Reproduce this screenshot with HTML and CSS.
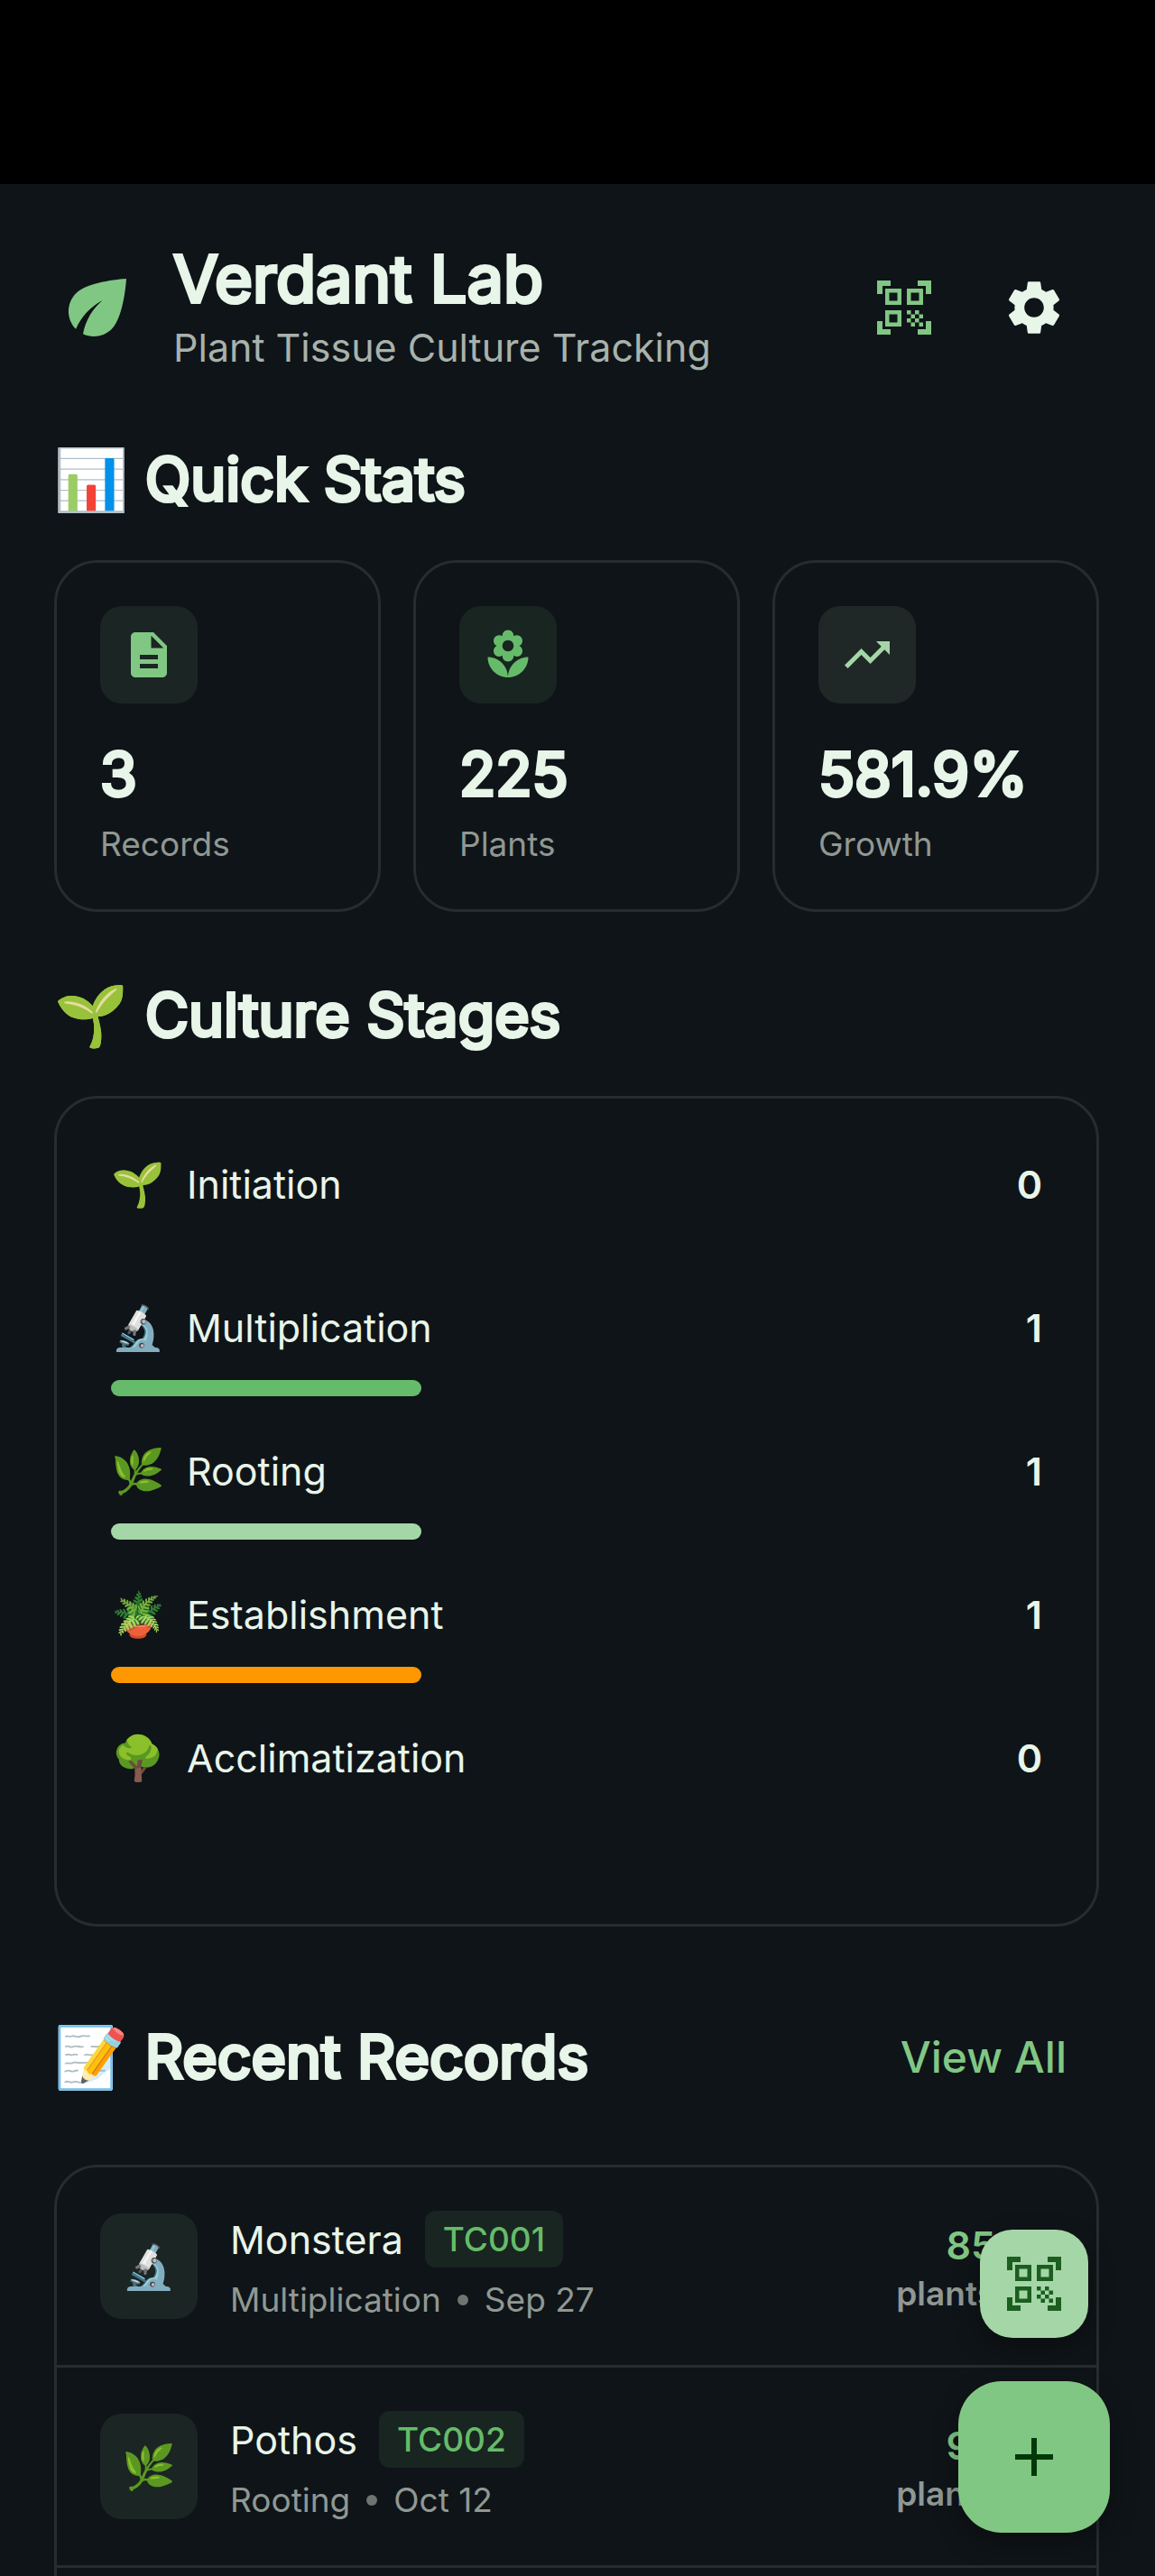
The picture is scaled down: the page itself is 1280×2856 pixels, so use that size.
FILE: index.html
```
<!DOCTYPE html>
<html lang="en">
<head>
    <meta charset="utf-8">
    <meta name="viewport" content="width=device-width, initial-scale=1">
    <title>Verdant Lab</title>
    <link rel="stylesheet" href="styles.css">
</head>
<body>
    <div class="status-bar"></div>

    <main class="app">
        <header class="app-header">
            <svg class="logo" viewBox="0 0 24 24" aria-hidden="true"><path d="M6.05 8.05c-2.73 2.73-2.73 7.15-.02 9.88 1.47-3.4 4.09-6.24 7.36-7.93-2.77 2.34-4.71 5.61-5.39 9.32 2.6 1.23 5.8.78 7.95-1.37C19.43 14.47 20 4 20 4S9.53 4.57 6.05 8.05z"/></svg>
            <div class="brand">
                <h1>Verdant Lab</h1>
                <p>Plant Tissue Culture Tracking</p>
            </div>
            <button class="icon-button scan" aria-label="Scan QR code">
                <svg viewBox="0 0 24 24"><path id="qr" d="M9.5 6.5v3h-3v-3h3M11 5H5v6h6V5zM9.5 14.5v3h-3v-3h3M11 13H5v6h6v-6zM17.5 6.5v3h-3v-3h3M19 5h-6v6h6V5zM13 13h1.5v1.5H13V13zM14.5 14.5H16V16h-1.5v-1.5zM16 13h1.5v1.5H16V13zM13 16h1.5v1.5H13V16zM14.5 17.5H16V19h-1.5v-1.5zM16 16h1.5v1.5H16V16zM17.5 14.5H19V16h-1.5v-1.5zM17.5 17.5H19V19h-1.5v-1.5zM22 7h-2V4h-3V2h5v5zM22 22v-5h-2v3h-3v2h5zM2 22h5v-2H4v-3H2v5zM2 2v5h2V4h3V2H2z"/></svg>
            </button>
            <button class="icon-button" aria-label="Settings">
                <svg viewBox="0 0 24 24"><path d="M19.14 12.94c.04-.3.06-.61.06-.94 0-.32-.02-.64-.07-.94l2.03-1.58c.18-.14.23-.41.12-.61l-1.92-3.32c-.12-.22-.37-.29-.59-.22l-2.39.96c-.5-.38-1.03-.7-1.62-.94L14.4 2.81c-.04-.24-.24-.41-.48-.41h-3.84c-.24 0-.43.17-.47.41L9.25 5.35c-.59.24-1.13.57-1.62.94l-2.39-.96c-.22-.08-.47 0-.59.22L2.74 8.87c-.12.21-.08.47.12.61l2.03 1.58c-.05.3-.09.63-.09.94s.02.64.07.94l-2.03 1.58c-.18.14-.23.41-.12.61l1.92 3.32c.12.22.37.29.59.22l2.39-.96c.5.38 1.03.7 1.62.94l.36 2.54c.05.24.24.41.48.41h3.84c.24 0 .44-.17.47-.41l.36-2.54c.59-.24 1.13-.56 1.62-.94l2.39.96c.22.08.47 0 .59-.22l1.92-3.32c.12-.22.07-.47-.12-.61l-2.01-1.58zM12 15.6c-1.98 0-3.6-1.62-3.6-3.6s1.62-3.6 3.6-3.6 3.6 1.62 3.6 3.6-1.62 3.6-3.6 3.6z"/></svg>
            </button>
        </header>

        <section>
            <h2>📊 Quick Stats</h2>
            <div class="stats">
                <div class="card stat">
                    <div class="stat-icon primary">
                        <svg viewBox="0 0 24 24"><path d="M14 2H6c-1.1 0-1.99.9-1.99 2L4 20c0 1.1.89 2 1.99 2H18c1.1 0 2-.9 2-2V8l-6-6zm2 16H8v-2h8v2zm0-4H8v-2h8v2zm-3-5V3.5L18.5 9H13z"/></svg>
                    </div>
                    <div class="stat-value">3</div>
                    <div class="stat-label">Records</div>
                </div>
                <div class="card stat">
                    <div class="stat-icon green">
                        <svg viewBox="0 0 24 24"><path d="M12 22c4.97 0 9-4.03 9-9-4.97 0-9 4.03-9 9zM5.6 10.25c0 1.38 1.12 2.5 2.5 2.5.53 0 1.01-.16 1.42-.44l-.02.19c0 1.38 1.12 2.5 2.5 2.5s2.5-1.12 2.5-2.5l-.02-.19c.4.28.89.44 1.42.44 1.38 0 2.5-1.12 2.5-2.5 0-1-.59-1.85-1.43-2.25.84-.4 1.43-1.25 1.43-2.25 0-1.38-1.12-2.5-2.5-2.5-.53 0-1.01.16-1.42.44l.02-.19C14.5 2.12 13.38 1 12 1S9.5 2.12 9.5 3.5l.02.19c-.4-.28-.89-.44-1.42-.44-1.38 0-2.5 1.12-2.5 2.5 0 1 .59 1.85 1.43 2.25-.84.4-1.43 1.25-1.43 2.25zM12 5.5c1.38 0 2.5 1.12 2.5 2.5s-1.12 2.5-2.5 2.5S9.5 9.38 9.5 8s1.12-2.5 2.5-2.5zM3 13c0 4.97 4.03 9 9 9 0-4.97-4.03-9-9-9z"/></svg>
                    </div>
                    <div class="stat-value">225</div>
                    <div class="stat-label">Plants</div>
                </div>
                <div class="card stat">
                    <div class="stat-icon light">
                        <svg viewBox="0 0 24 24"><path d="M16 6l2.29 2.29-4.88 4.88-4-4L2 16.59 3.41 18l6-6 4 4 6.3-6.29L22 12V6z"/></svg>
                    </div>
                    <div class="stat-value">581.9%</div>
                    <div class="stat-label">Growth</div>
                </div>
            </div>
        </section>

        <section>
            <h2>🌱 Culture Stages</h2>
            <ul class="card stages">
                <li>
                    <div class="stage-row"><span class="emoji">🌱</span><span class="stage-name">Initiation</span><span class="stage-count">0</span></div>
                    <div class="bar" style="width: 0%"></div>
                </li>
                <li>
                    <div class="stage-row"><span class="emoji">🔬</span><span class="stage-name">Multiplication</span><span class="stage-count">1</span></div>
                    <div class="bar green" style="width: 33.33%"></div>
                </li>
                <li>
                    <div class="stage-row"><span class="emoji">🌿</span><span class="stage-name">Rooting</span><span class="stage-count">1</span></div>
                    <div class="bar light" style="width: 33.33%"></div>
                </li>
                <li>
                    <div class="stage-row"><span class="emoji">🪴</span><span class="stage-name">Establishment</span><span class="stage-count">1</span></div>
                    <div class="bar orange" style="width: 33.33%"></div>
                </li>
                <li>
                    <div class="stage-row"><span class="emoji">🌳</span><span class="stage-name">Acclimatization</span><span class="stage-count">0</span></div>
                    <div class="bar" style="width: 0%"></div>
                </li>
            </ul>
        </section>

        <section>
            <div class="section-head">
                <h2>📝 Recent Records</h2>
                <a class="view-all" href="#records">View All</a>
            </div>
            <ul class="card records" id="records">
                <li>
                    <div class="record-icon">🔬</div>
                    <div class="record-info">
                        <div class="record-title">Monstera <span class="badge">TC001</span></div>
                        <div class="record-meta">Multiplication<i class="dot"></i>Sep 27</div>
                    </div>
                    <div class="record-count"><strong>85</strong><span>plants</span></div>
                </li>
                <li>
                    <div class="record-icon">🌿</div>
                    <div class="record-info">
                        <div class="record-title">Pothos <span class="badge">TC002</span></div>
                        <div class="record-meta">Rooting<i class="dot"></i>Oct 12</div>
                    </div>
                    <div class="record-count"><strong>95</strong><span>plants</span></div>
                </li>
                <li></li>
            </ul>
        </section>
    </main>

    <div class="fabs">
        <button class="fab fab-small" aria-label="Scan QR code">
            <svg viewBox="0 0 24 24"><use href="#qr"/></svg>
        </button>
        <button class="fab" aria-label="Add record">
            <svg viewBox="0 0 24 24"><path d="M19 13h-6v6h-2v-6H5v-2h6V5h2v6h6v2z"/></svg>
        </button>
    </div>
</body>
</html>
```
FILE: styles.css
```
* {
    box-sizing: border-box;
}
body {
    margin: 0;
    height: 100vh;
    display: flex;
    flex-direction: column;
    overflow: hidden;
    background: #0f1418;
    color: #e8f5e9;
    font-family: Inter, "Noto Color Emoji", sans-serif;
    font-size: 43px;
}
h1, h2, p, ul {
    margin: 0;
    padding: 0;
}
ul {
    list-style: none;
}
svg {
    display: block;
    width: 72px;
    height: 72px;
    fill: currentColor;
}
button {
    display: flex;
    align-items: center;
    justify-content: center;
    padding: 0;
    border: none;
    background: none;
    color: inherit;
    font: inherit;
    cursor: pointer;
}
.status-bar {
    flex: none;
    height: 204px;
    background: #000;
}
.app {
    flex: 1;
    min-height: 0;
    overflow: hidden;
    display: flex;
    flex-direction: column;
    gap: 72px;
    padding: 60px 62px 0 60px;
}
.app > * {
    flex: none;
}

/* Header */
.app-header {
    display: flex;
    align-items: center;
}
.logo {
    width: 96px;
    height: 96px;
    margin-right: 36px;
    color: #81c784;
}
.brand {
    flex: 1;
}
.brand p {
    line-height: 63px;
    color: #a8b2ab;
}
.icon-button {
    width: 144px;
    height: 144px;
}
.icon-button.scan {
    color: #81c784;
}

/* Heavy text: regular cut thickened with a stroke */
h1, h2, .stat-value {
    font-weight: 400;
    -webkit-text-stroke: 4px currentColor;
}
h1 {
    font-size: 72px;
    line-height: 90px;
}
h2 {
    font-size: 66px;
    line-height: 84px;
    margin-bottom: 48px;
}
.card {
    border: 3px solid #272c2f;
    border-radius: 48px;
}

/* Quick stats */
.stats {
    display: grid;
    grid-template-columns: repeat(3, minmax(0, 1fr));
    gap: 36px;
}
.stat {
    padding: 48px;
}
.stat-icon {
    display: flex;
    align-items: center;
    justify-content: center;
    width: 108px;
    height: 108px;
    margin-bottom: 36px;
    border-radius: 24px;
}
.stat-icon svg {
    width: 60px;
    height: 60px;
}
.stat-icon.primary {
    color: #81c784;
    background: #1b2523;
}
.stat-icon.green {
    color: #66bb6a;
    background: #182520;
}
.stat-icon.light {
    color: #a5d6a7;
    background: #1f2827;
}
.stat-value {
    font-size: 66px;
    line-height: 84px;
    margin-bottom: 12px;
}
.stat-label {
    font-size: 37px;
    line-height: 48px;
    color: #8f9893;
}

/* Culture stages */
.stages {
    padding: 60px;
}
.stages li {
    margin-bottom: 48px;
}
.stage-row {
    display: flex;
    align-items: center;
    height: 69px;
    margin-bottom: 24px;
}
.emoji {
    width: 84px;
    font-size: 48px;
    line-height: 69px;
}
.stage-name {
    flex: 1;
}
.stage-count {
    font-weight: 600;
}
.bar {
    height: 18px;
    border-radius: 9px;
}
.bar.green {
    background: #66bb6a;
}
.bar.light {
    background: #a5d6a7;
}
.bar.orange {
    background: #ff9800;
}

/* Recent records */
.section-head {
    display: flex;
    align-items: center;
    justify-content: space-between;
    height: 144px;
    margin-bottom: 48px;
}
.section-head h2 {
    margin: 0;
}
.view-all {
    padding: 0 36px;
    font-size: 48px;
    font-weight: 500;
    color: #81c784;
    text-decoration: none;
}
.records li {
    display: flex;
    align-items: center;
    height: 222px;
    padding: 0 112px 0 48px;
    border-bottom: 3px solid #272c2f;
}
.record-icon {
    width: 108px;
    height: 117px;
    margin-right: 36px;
    border-radius: 24px;
    background: #1b2523;
    font-size: 48px;
    line-height: 117px;
    text-align: center;
}
.record-info {
    flex: 1;
}
.record-title {
    display: flex;
    align-items: center;
    gap: 24px;
    margin-bottom: 12px;
}
.badge {
    padding: 0 20px;
    border-radius: 12px;
    background: #182520;
    color: #66bb6a;
    font-size: 37px;
    line-height: 63px;
    font-weight: 500;
}
.record-meta {
    display: flex;
    align-items: center;
    gap: 18px;
    font-size: 37px;
    line-height: 48px;
    color: #8f9893;
}
.dot {
    width: 12px;
    height: 12px;
    border-radius: 50%;
    background: #6c7571;
}
.record-count {
    display: flex;
    flex-direction: column;
    align-items: flex-end;
}
.record-count strong {
    line-height: 60px;
    font-weight: 600;
    color: #81c784;
}
.record-count span {
    font-size: 37px;
    line-height: 48px;
    font-weight: 600;
    color: #8f9893;
}

/* Floating buttons */
.fabs {
    position: fixed;
    right: 50px;
    bottom: 48px;
    display: flex;
    flex-direction: column;
    align-items: center;
    gap: 48px;
}
.fab {
    width: 168px;
    height: 168px;
    border-radius: 48px;
    background: #81c784;
    color: #003909;
    box-shadow: 0 12px 30px rgba(0, 0, 0, 0.3);
}
.fab-small {
    width: 120px;
    height: 120px;
    border-radius: 36px;
    background: #a5d6a7;
    color: #1b5e20;
}
```
